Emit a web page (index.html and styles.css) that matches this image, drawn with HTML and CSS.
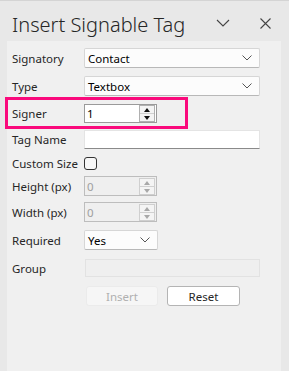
FILE: index.html
```html
<!DOCTYPE html>
<html>
<head>
<meta charset="utf-8">
<link rel="stylesheet" href="styles.css">
</head>
<body>
<div class="pane">
  <div class="header">
    <h1 class="title">Insert Signable Tag</h1>
    <div class="hdr-icons">
      <svg class="chev" width="14" height="8" viewBox="0 0 14 8"><path d="M1 1 L7 7 L13 1" fill="none" stroke="#444" stroke-width="1.1"/></svg>
      <svg class="close" width="11" height="11" viewBox="0 0 11 11"><path d="M0.5 0.5 L10.5 10.5 M10.5 0.5 L0.5 10.5" fill="none" stroke="#444" stroke-width="1.1"/></svg>
    </div>
  </div>
  <div class="panel">
    <div class="row r1">
      <span class="lbl">Signatory</span>
      <div class="select wide"><span>Contact</span><svg width="10" height="6" viewBox="0 0 10 6"><path d="M0.5 0.5 L5 5 L9.5 0.5" fill="none" stroke="#555" stroke-width="1"/></svg></div>
    </div>
    <div class="row r2">
      <span class="lbl">Type</span>
      <div class="select wide"><span>Textbox</span><svg width="10" height="6" viewBox="0 0 10 6"><path d="M0.5 0.5 L5 5 L9.5 0.5" fill="none" stroke="#555" stroke-width="1"/></svg></div>
    </div>
    <div class="row highlight">
      <span class="lbl">Signer</span>
      <div class="spin active"><span class="val">1</span>
        <div class="btns"><span class="b up"></span><span class="b down"></span></div>
      </div>
    </div>
    <div class="row r4">
      <span class="lbl">Tag Name</span>
      <div class="text wide"></div>
    </div>
    <div class="row r5">
      <span class="lbl">Custom Size</span>
      <span class="check"></span>
    </div>
    <div class="row r6">
      <span class="lbl">Height (px)</span>
      <div class="spin disabled"><span class="val">0</span>
        <div class="btns"><span class="b up"></span><span class="b down"></span></div>
      </div>
    </div>
    <div class="row r7">
      <span class="lbl">Width (px)</span>
      <div class="spin disabled"><span class="val">0</span>
        <div class="btns"><span class="b up"></span><span class="b down"></span></div>
      </div>
    </div>
    <div class="row r8">
      <span class="lbl">Required</span>
      <div class="select small"><span>Yes</span><svg width="10" height="6" viewBox="0 0 10 6"><path d="M0.5 0.5 L5 5 L9.5 0.5" fill="none" stroke="#555" stroke-width="1"/></svg></div>
    </div>
    <div class="row r9">
      <span class="lbl">Group</span>
      <div class="group"></div>
    </div>
    <div class="row buttons">
      <span class="btn insert">Insert</span>
      <span class="btn reset">Reset</span>
    </div>
  </div>
</div>
</body>
</html>
```
FILE: styles.css
```css
* { box-sizing: border-box; }
html, body { margin: 0; padding: 0; }
body {
  width: 289px;
  height: 371px;
  background: #e8e8e8;
  font-family: "Noto Sans", "Open Sans", sans-serif;
  color: #262626;
  overflow: hidden;
}
.pane {
  height: 371px;
  border-top: 1px solid #d4d4d4;
  display: flex;
  flex-direction: column;
}
.header {
  height: 40px;
  display: flex;
  align-items: center;
  justify-content: space-between;
  padding: 0 18px 0 12px;
}
.title {
  margin: 0;
  font-weight: 300;
  font-size: 20px;
  color: #262626;
  letter-spacing: 0;
  padding-top: 6px;
}
.hdr-icons {
  display: flex;
  align-items: center;
  gap: 30px;
  padding-top: 4px;
}
.panel {
  flex: 1;
  margin: 0 8px 0 7px;
  background: #f0f0f0;
  padding: 7px 21px 0 5px;
  display: flex;
  flex-direction: column;
  font-size: 11.5px;
}
.row {
  display: flex;
  align-items: center;
  height: 20px;
}
.lbl {
  width: 72px;
  flex: none;
  color: #262626;
}
.r1 { margin-bottom: 8px; }
.r2 { margin-bottom: 1px; }
.highlight {
  height: 32px;
  margin-left: -7px;
  width: 183px;
  border: 3px solid #fa0a7c;
  padding-left: 4px;
  margin-bottom: 1px;
}
.r4 { height: 19px; margin-bottom: 4px; }
.r5 { margin-bottom: 3px; }
.r6 { margin-bottom: 6px; }
.r7 { margin-bottom: 8px; }
.r8 { margin-bottom: 9px; }
.r9 { height: 18px; margin-bottom: 9px; }

.select {
  height: 20px;
  background: #fcfcfc;
  border: 1px solid #d6d6d6;
  border-bottom-color: #b8b8b8;
  border-radius: 2px;
  display: flex;
  align-items: center;
  justify-content: space-between;
  padding: 0 7px 0 3px;
  color: #000;
}
.wide { width: 176px; }
.small { width: 74px; }
.text {
  height: 19px;
  background: #fff;
  border: 1px solid #e4e4e4;
  border-bottom: 1px solid #8a8a8a;
}
.check {
  width: 13px;
  height: 13px;
  border: 1px solid #333;
  border-radius: 3px;
  background: #f7f7f7;
}
.spin {
  width: 73px;
  height: 20px;
  display: flex;
  align-items: center;
  justify-content: space-between;
  padding: 0 1px 0 2px;
}
.spin.active {
  background: #fff;
  border: 1px solid #9a9a9a;
  color: #000;
  height: 19px;
}
.spin.disabled {
  border: 1px solid #bdbdbd;
  background: #efefef;
  color: #a0a0a0;
}
.btns {
  display: flex;
  flex-direction: column;
  border: 1px solid #b0b0b0;
  width: 16px;
  height: 17px;
}
.spin.disabled .btns { border-color: #cfcfcf; }
.b {
  flex: 1;
  position: relative;
  background: #f4f4f4;
}
.b.up { border-bottom: 1px solid #d0d0d0; }
.b::after {
  content: "";
  position: absolute;
  left: 4px;
  top: 2px;
  border-left: 3.5px solid transparent;
  border-right: 3.5px solid transparent;
}
.b.up::after { border-bottom: 4px solid #111; }
.b.down::after { border-top: 4px solid #111; top: 2px; }
.spin.disabled .b.up::after { border-bottom-color: #a8a8a8; }
.spin.disabled .b.down::after { border-top-color: #a8a8a8; }
.group {
  width: 175px;
  height: 18px;
  margin-left: 1px;
  border: 1px solid #e2e2e2;
  background: #efefef;
}
.buttons {
  padding-left: 74px;
  gap: 9px;
}
.btn {
  width: 72px;
  height: 20px;
  border-radius: 3px;
  display: flex;
  align-items: center;
  justify-content: center;
  font-size: 11.5px;
}
.insert {
  background: #f6f6f6;
  border: 1px solid #ebebeb;
  color: #b0b0b0;
}
.reset {
  width: 73px;
  background: #fff;
  border: 1px solid #b4b4b4;
  color: #262626;
}
```
